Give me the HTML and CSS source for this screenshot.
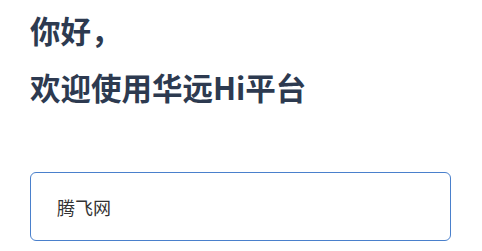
FILE: index.html
```html
<!DOCTYPE html>
<html lang="zh-CN">
<head>
  <meta charset="UTF-8">
  <meta name="viewport" content="width=device-width, initial-scale=1.0">
  <title>登录 - 华远Hi平台</title>
  <link rel="stylesheet" href="styles.css">
</head>
<body>
  <div class="container">
    <h1 class="greeting">你好，<br>欢迎使用华远Hi平台</h1>
    <div class="field">腾飞网</div>
  </div>
</body>
</html>
```

FILE: styles.css
```css
body {
  font-family: "Noto Sans CJK SC", "Noto Sans", sans-serif;
  margin: 0;
  padding: 0;
  background-color: #fff;
}
.container {
  padding: 2px 31px 0 30px;
}
.greeting {
  margin: 0;
  font-size: 30.5px;
  line-height: 57px;
  font-weight: bold;
  color: #2d3a50;
}
.field {
  margin-top: 56px;
  height: 69px;
  box-sizing: border-box;
  border: 1px solid #4a80cc;
  border-radius: 6px;
  padding: 0 26px;
  display: flex;
  align-items: center;
  font-size: 18px;
  color: #333;
}
```
